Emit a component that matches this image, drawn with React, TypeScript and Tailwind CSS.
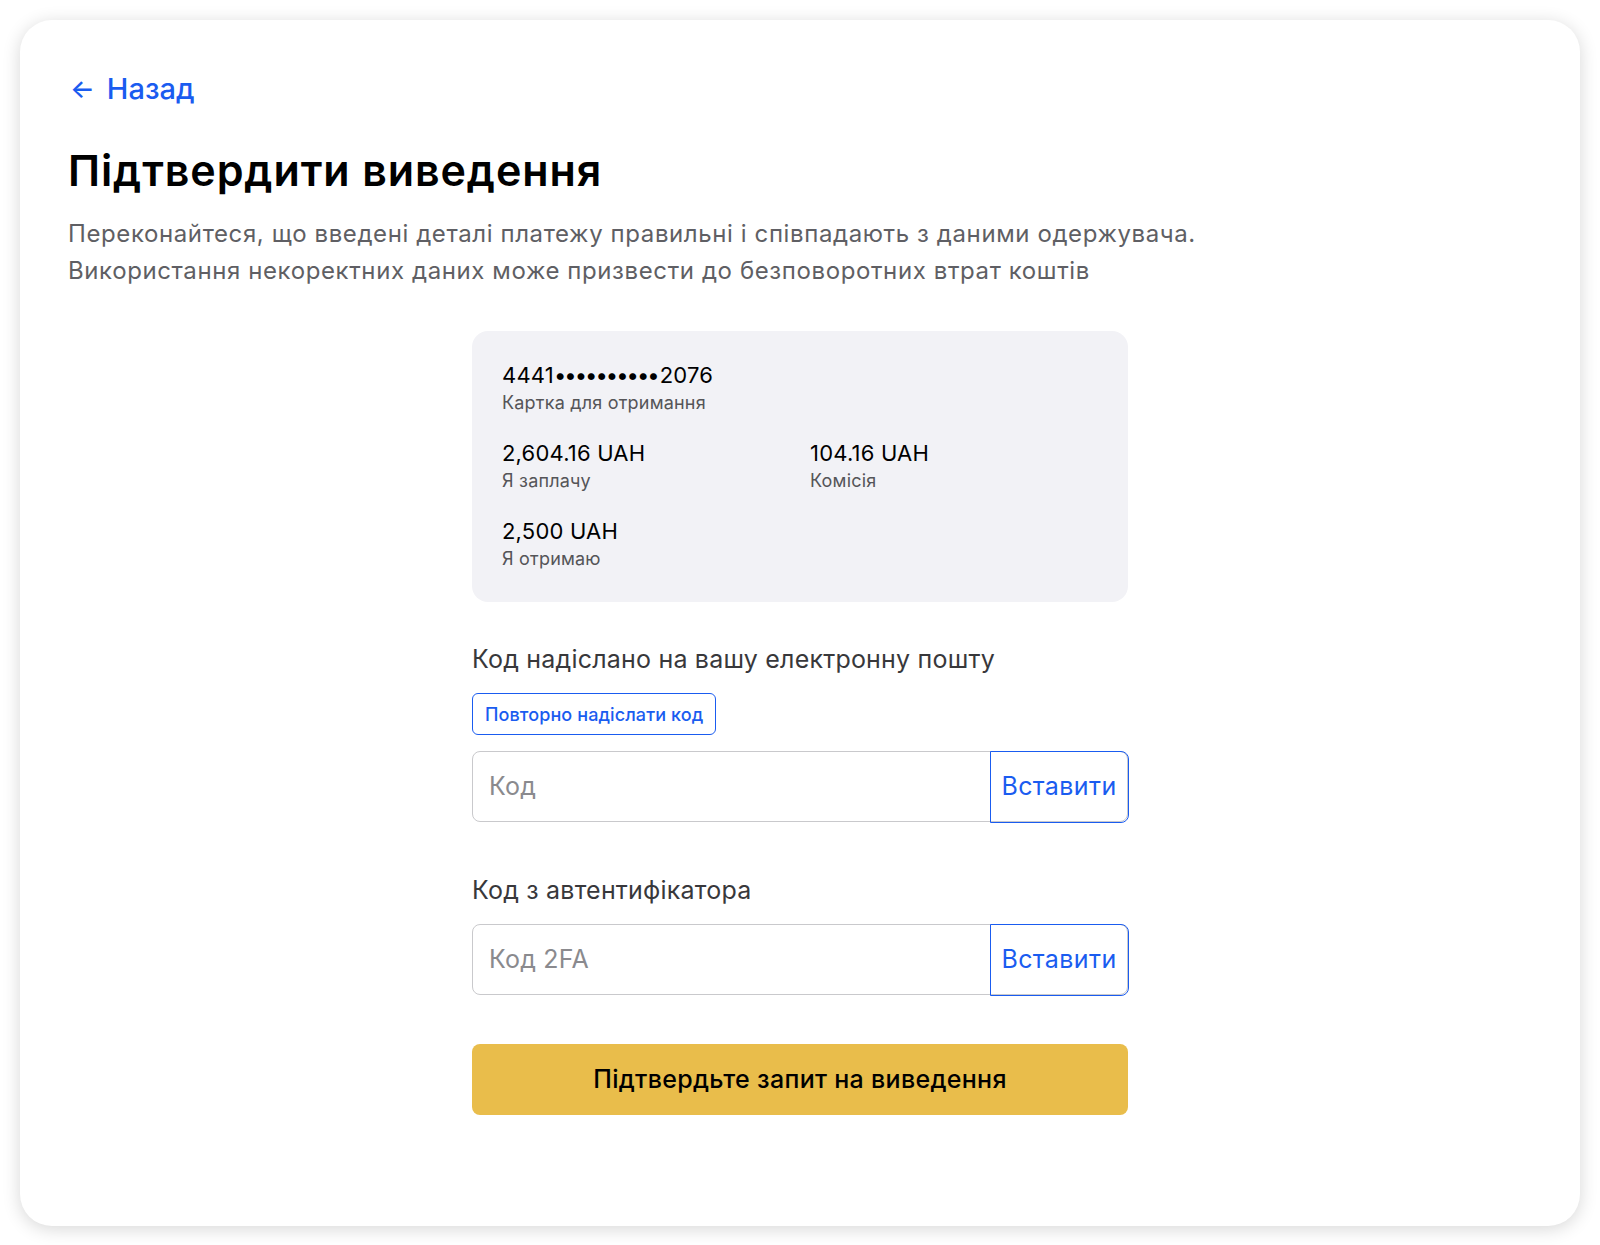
import { useState } from "react";
import type { ReactNode } from "react";

const font = { fontFamily: "Inter, 'Noto Sans', sans-serif" };

function CodeField({ placeholder }: { placeholder: string }) {
  const [value, setValue] = useState("");
  return (
    <div className="flex h-[71px] w-full rounded-lg border-[1.5px] border-[#c9c9cc] bg-white">
      <input
        value={value}
        onChange={(e) => setValue(e.target.value)}
        placeholder={placeholder}
        className="min-w-0 flex-1 rounded-l-lg bg-transparent px-4 text-[25px] tracking-[0.2px] text-[#1c1c1e] outline-none placeholder:text-[#8a8a8e]"
      />
      <button className="-my-[1.5px] -mr-[1.5px] w-[139px] rounded-r-lg border-[1.5px] border-[#1a5cf0] text-[25px] tracking-[0.4px] text-[#1a5cf0]">
        Вставити
      </button>
    </div>
  );
}

function Stat({ value, label }: { value: ReactNode; label: string }) {
  return (
    <div className="flex flex-col">
      <span className="text-[22px] leading-[28px] tracking-[0.2px] text-black">{value}</span>
      <span className="text-[18px] leading-[28px] tracking-[0.2px] text-[#555558]">{label}</span>
    </div>
  );
}

export default function App() {
  return (
    <div className="min-h-[1245px] bg-white p-5" style={font}>
      <div className="rounded-[32px] bg-white px-12 pb-[111px] pt-[51px] shadow-[0_3px_18px_rgba(0,0,0,0.16)]">
        <a href="#" className="flex items-center gap-3 text-[29px] leading-[36px] font-medium text-[#1a5cf0]">
          <span className="pl-0.5 text-[26px]">←</span>
          <span>Назад</span>
        </a>

        <h1 className="mt-[37px] text-[43px] leading-[52px] font-semibold tracking-[0.9px] text-black">
          Підтвердити виведення
        </h1>
        <p className="mt-[19px] text-[24px] leading-[37px] tracking-[0.6px] text-[#5f5f64]">
          Переконайтеся, що введені деталі платежу правильні і співпадають з даними одержувача.
          <br />
          Використання некоректних даних може призвести до безповоротних втрат коштів
        </p>

        <div className="mx-auto mt-[42px] w-[656px]">
          <div className="rounded-2xl bg-[#f2f2f6] px-[30px] pb-[29px] pt-[30px]">
            <Stat
              value={
                <>
                  4441<span className="tracking-[-2px]">••••••••••</span>
                  <span className="ml-[2px]">2076</span>
                </>
              }
              label="Картка для отримання"
            />
            <div className="mt-[22px] grid grid-cols-2 gap-x-5 gap-y-[22px]">
              <Stat value="2,604.16 UAH" label="Я заплачу" />
              <Stat value="104.16 UAH" label="Комісія" />
              <Stat value="2,500 UAH" label="Я отримаю" />
            </div>
          </div>

          <p className="mt-[41px] text-[25px] leading-[32px] tracking-[0.2px] text-[#38383b]">
            Код надіслано на вашу електронну пошту
          </p>
          <button className="mt-[18px] h-[42px] rounded-md border-[1.5px] border-[#1a5cf0] px-[12px] text-[18px] font-medium tracking-[0.1px] text-[#1a5cf0]">
            Повторно надіслати код
          </button>
          <div className="mt-4">
            <CodeField placeholder="Код" />
          </div>

          <p className="mt-[52px] text-[25px] leading-[32px] tracking-[0.2px] text-[#38383b]">Код з автентифікатора</p>
          <div className="mt-[18px]">
            <CodeField placeholder="Код 2FA" />
          </div>

          <button className="mt-[49px] h-[71px] w-full rounded-lg bg-[#e9bd4b] text-[25px] font-medium tracking-[0.3px] text-black">
            Підтвердьте запит на виведення
          </button>
        </div>
      </div>
    </div>
  );
}
